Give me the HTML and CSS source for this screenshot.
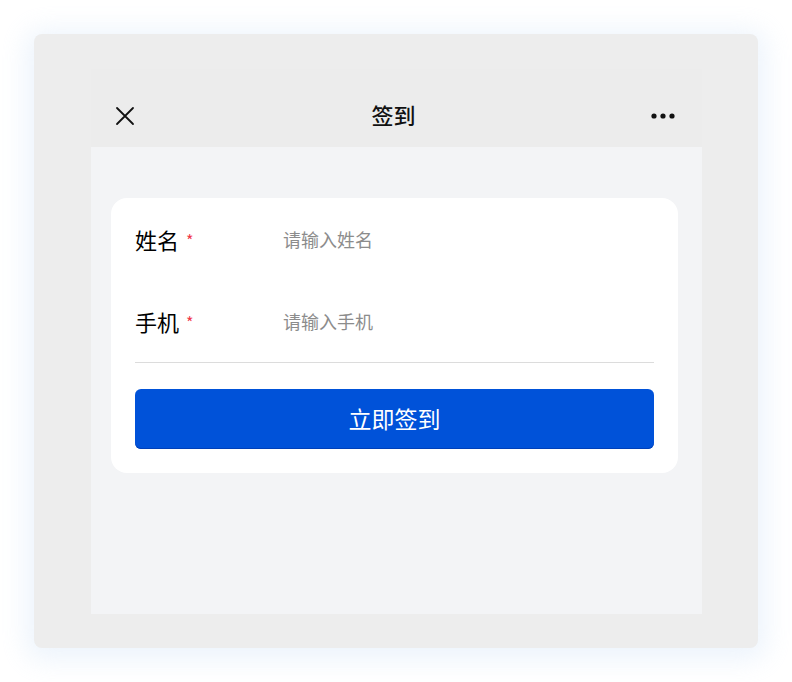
FILE: index.html
```html
<!DOCTYPE html>
<html lang="zh">
<head>
<meta charset="utf-8">
<link rel="stylesheet" href="styles.css">
</head>
<body>
<div class="frame">
  <div class="phone">
    <div class="nav">
      <svg class="close" width="20" height="20" viewBox="0 0 20 20"><path d="M2 2L18 18M18 2L2 18" stroke="#111" stroke-width="1.8" fill="none" stroke-linecap="round"/></svg>
      <div class="title">签到</div>
      <svg class="more" width="26" height="8" viewBox="0 0 26 8"><circle cx="4" cy="4" r="2.6" fill="#111"/><circle cx="13" cy="4" r="2.6" fill="#111"/><circle cx="22" cy="4" r="2.6" fill="#111"/></svg>
    </div>
    <div class="content">
      <div class="card">
        <div class="row">
          <div class="label">姓名<span class="req">*</span></div>
          <div class="ph">请输入姓名</div>
        </div>
        <div class="row last">
          <div class="label">手机<span class="req">*</span></div>
          <div class="ph">请输入手机</div>
        </div>
        <div class="btn">立即签到</div>
      </div>
    </div>
  </div>
</div>
</body>
</html>
```
FILE: styles.css
```css
html, body {
  margin: 0;
  padding: 0;
  background: #ffffff;
  font-family: "Noto Sans CJK SC", "Noto Sans", sans-serif;
}
.frame {
  margin: 34px;
  width: 724px;
  height: 614px;
  box-sizing: border-box;
  padding: 35px 56px 0 57px;
  background: #ededed;
  border-radius: 8px;
  box-shadow: 0 4px 26px 8px rgba(225, 236, 250, 0.6);
}
.phone {
  width: 611px;
  height: 545px;
  background: #f3f4f6;
  display: flex;
  flex-direction: column;
}
.nav {
  height: 78px;
  background: #ececec;
  display: flex;
  align-items: center;
  justify-content: space-between;
  padding: 16px 26px 0 24px;
  position: relative;
  box-sizing: border-box;
}
.title {
  position: absolute;
  left: 0;
  right: 0;
  top: 12px;
  bottom: 0;
  display: flex;
  align-items: center;
  justify-content: center;
  font-size: 22px;
  font-weight: 500;
  color: #111;
  pointer-events: none;
  padding-right: 6px;
}
.content {
  padding: 51px 24px 0 20px;
}
.card {
  background: #fff;
  border-radius: 16px;
  padding: 0 24px 24px 24px;
}
.row {
  height: 82px;
  display: flex;
  align-items: center;
}
.row.last {
  border-bottom: 1px solid #dcdcdc;
}
.label {
  width: 148px;
  font-size: 22px;
  color: #000;
  display: flex;
  align-items: center;
  margin-top: -1px;
}
.req {
  color: #f0384a;
  font-size: 16px;
  margin-left: 7px;
  margin-top: 2px;
}
.ph {
  font-size: 18px;
  color: #8c8c8c;
  margin-top: -1px;
}
.btn {
  margin-top: 26px;
  height: 60px;
  background: #0052d9;
  border-radius: 6px;
  box-shadow: inset 0 -1px 0 #0040b8;
  color: #fff;
  font-size: 23px;
  display: flex;
  align-items: center;
  justify-content: center;
  padding-bottom: 2px;
  box-sizing: border-box;
}
```
